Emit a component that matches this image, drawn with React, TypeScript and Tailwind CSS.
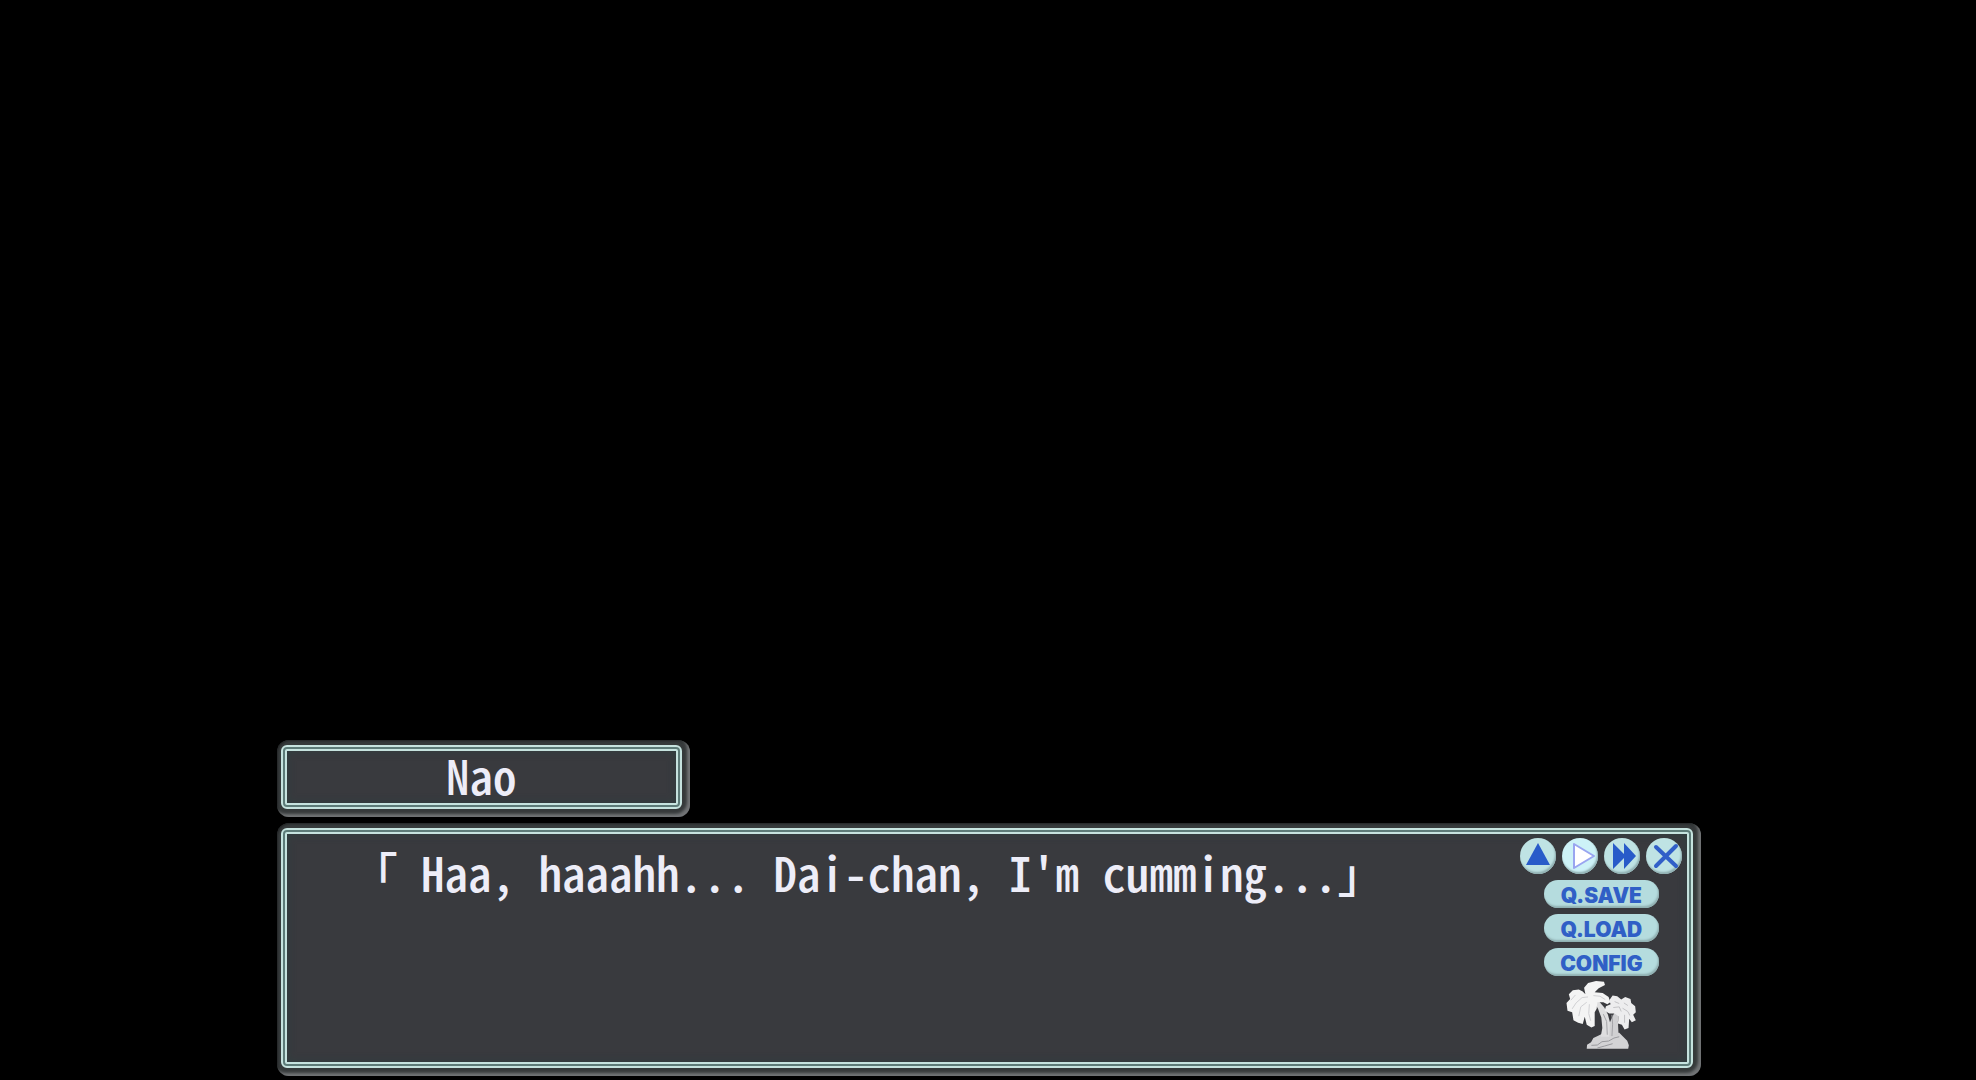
import React from "react";

const Frame = ({ children }: { children: React.ReactNode }) => (
  <div className="rounded-xl bg-[#363a3b] pt-[5px] pl-[4px] pr-[8px] pb-[8px] shadow-[inset_-3px_-3px_3px_#727476,inset_1px_1px_2px_#222526]">
    <div className="rounded-md border-2 border-[#c6e3df] bg-[#5d7b78] p-[2px]">
      <div className="rounded-xs border-2 border-[#c6e3df] bg-[#393a3e] shadow-[inset_0_0_8px_#2f3f40]">
        {children}
      </div>
    </div>
  </div>
);

const PalmTree = () => (
  <svg viewBox="30 18 210 205" className="mt-[5px] h-[68px] w-[70px]" aria-hidden="true">
    {/* sand */}
    <path
      d="M92 222 L93 210 L105 203 L112 190 L128 182 L140 176 L190 174 L202 186 L214 198 L219 212 L217 222 Z"
      fill="#d3d3d5"
    />
    <path
      d="M106 212 L124 211 L138 201 L158 199 L174 190 L190 186 M124 220 L146 214 L170 207"
      fill="none"
      stroke="#98989c"
      strokeWidth="3"
    />
    {/* trunks */}
    <path d="M116 84 L128 78 L145 98 L156 120 L164 150 L165 186 L134 186 L139 160 L136 128 L126 102 Z" fill="#dededf" />
    <path d="M160 186 L162 142 L176 112 L190 114 L186 140 L188 182 Z" fill="#d0d0d2" />
    <path d="M142 118 L152 140 L154 180 M168 120 L170 148 L168 184" fill="none" stroke="#a3a3a7" strokeWidth="3" />
    {/* right leaves */}
    <path
      d="M146 108 L150 94 L164 88 L160 76 L170 62 L184 64 L196 74 L208 66 L224 72 L226 84 L238 94 L240 112 L232 120 L240 136 L228 142 L220 132 L218 160 L206 164 L198 150 L186 146 L188 124 L176 116 L160 116 Z"
      fill="#ededee"
    />
    <path
      d="M172 98 L190 96 L196 110 M204 84 L216 92 M200 100 L216 110 L222 122 M206 120 L206 144 M176 80 L190 86"
      fill="none"
      stroke="#c3c3c6"
      strokeWidth="3"
    />
    {/* left leaves */}
    <path
      d="M88 58 L84 38 L96 24 L120 18 L144 20 L147 30 L128 40 L116 52 L140 54 L158 66 L163 82 L154 88 L142 82 L124 82 L122 102 L116 112 L116 154 L106 158 L92 150 L86 126 L80 148 L66 144 L52 136 L48 112 L34 108 L31 84 L42 72 L38 58 L50 46 L68 44 L80 50 Z"
      fill="#f4f4f4"
    />
    <path
      d="M96 66 L78 68 L60 84 L48 102 M92 82 L74 96 L68 124 M100 88 L98 116 L104 138 M112 62 L132 64 L148 74 M58 60 L44 76"
      fill="none"
      stroke="#d0d0d3"
      strokeWidth="3"
    />
  </svg>
);

const controls = [
  {
    label: "Hide window",
    face: "bg-[#bfe3e4]",
    icon: <path d="M18 5 L30 27 H6 Z" fill="#285bc9" />,
  },
  {
    label: "Auto play",
    face: "bg-[#cdf2f7]",
    icon: <path d="M12 6 L32 18 L12 30 Z" fill="#fff" stroke="#99a5f0" strokeWidth="2" strokeLinejoin="round" />,
  },
  {
    label: "Skip",
    face: "bg-[#bfe3e4]",
    icon: <path d="M9 5 L20 16 V5 L32 18 L20 31 V20 L9 31 Z" fill="#285bc9" />,
  },
  {
    label: "Close",
    face: "bg-[#bfe3e4]",
    icon: <path d="M10 9 L30 28 M30 8 L10 28" fill="none" stroke="#315fc8" strokeWidth="4" strokeLinecap="round" />,
  },
];

const menu = ["Q.SAVE", "Q.LOAD", "CONFIG"];

const textStyle =
  "text-[47px] leading-[48px] font-medium whitespace-pre text-[#ededf8] font-['Noto_Sans_CJK_JP',monospace] [font-feature-settings:'hwid']";

const App = () => {
  return (
    <main className="flex min-h-screen flex-col justify-end gap-[6px] bg-black pr-[13.9%] pb-[4px] pl-[14%]">
      <div className="w-[29%]">
        <Frame>
          <h1 className={`${textStyle} pb-[4px] text-center`}>Nao</h1>
        </Frame>
      </div>

      <Frame>
        <div className="flex justify-between pt-[4px] pr-[5px] pb-[13px]">
          <p className={`${textStyle} pt-[10px] pl-[64px]`}>
            「 Haa, haaahh... Dai-chan, I'm cumming...」
          </p>
          <div className="flex shrink-0 flex-col items-center">
            <div className="flex gap-[6px]">
              {controls.map((c) => (
                <button
                  key={c.label}
                  aria-label={c.label}
                  className={`size-[36px] rounded-full shadow-[inset_-1px_-2px_2px_#8faeb0] ${c.face}`}
                >
                  <svg viewBox="0 0 36 36" className="size-[36px]">
                    {c.icon}
                  </svg>
                </button>
              ))}
            </div>
            <div className="mt-[6px] flex flex-col gap-[6px]">
              {menu.map((m) => (
                <button
                  key={m}
                  className="h-[28px] w-[115px] rounded-full bg-[#b5dcde] pt-[4px] text-center font-['Inter',sans-serif] text-[21px] leading-[24px] font-black text-[#305fc6] shadow-[inset_-1px_-2px_2px_#8faeb0]"
                >
                  {m}
                </button>
              ))}
            </div>
            <PalmTree />
          </div>
        </div>
      </Frame>
    </main>
  );
};

export default App;
